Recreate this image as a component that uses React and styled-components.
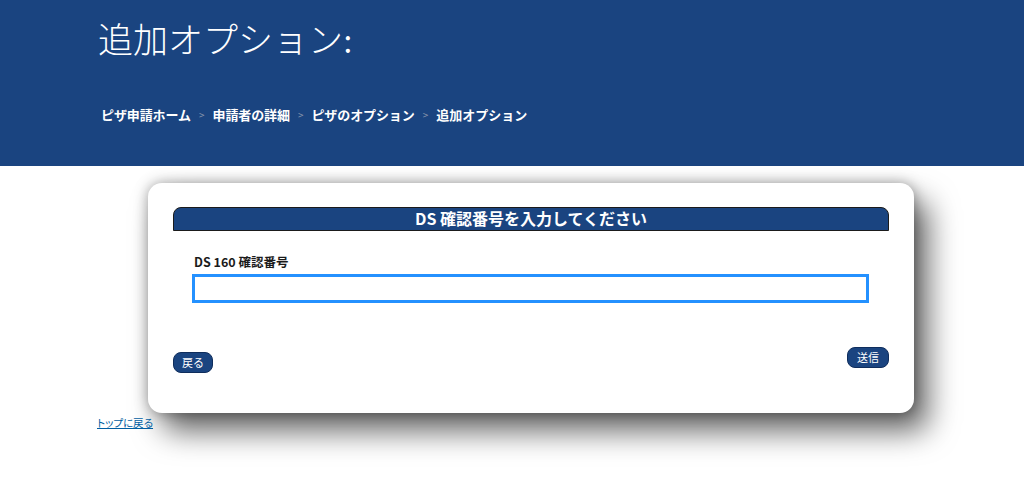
import React from "react";
import styled, { createGlobalStyle } from "styled-components";

const GlobalStyle = createGlobalStyle`
  body {
    margin: 0;
    min-height: 100vh;
    background: #fff;
    font-family: "Noto Sans CJK JP", "Noto Sans", sans-serif;
  }
`;

const Page = styled.div`
  min-height: 100vh;
  padding-bottom: 40px;
  box-sizing: border-box;
`;

const Header = styled.header`
  background: #1a4480;
  height: 166px;
  padding: 0 0 0 98px;
  box-sizing: border-box;
  color: #fff;
`;

const Title = styled.h1`
  margin: 0;
  padding-top: 16px;
  font-family: "Liberation Serif", "Noto Sans CJK JP", serif;
  font-size: 35px;
  font-weight: 300;
  line-height: 52px;
`;

const Crumbs = styled.nav`
  display: flex;
  align-items: center;
  margin-top: 38px;
  margin-left: 3px;
  font-size: 13px;
  font-weight: 700;
  line-height: 18px;
`;

const Crumb = styled.span`
  color: #fff;
  letter-spacing: ${({ current }) => (current ? 0 : -0.1)}px;
`;

const Sep = styled.span`
  color: #8a97ad;
  font-size: 10px;
  font-weight: 400;
  margin: 0 8px;
`;

const Main = styled.main`
  padding: 17px 0 0 148px;
`;

const Card = styled.section`
  width: 766px;
  box-sizing: border-box;
  background: #fff;
  border-radius: 14px;
  padding: 24px 25px 40px;
  box-shadow: 14px 18px 30px rgba(0, 0, 0, 0.6), 0 0 14px rgba(0, 0, 0, 0.35);
`;

const Heading = styled.h2`
  margin: 0;
  height: 24px;
  box-sizing: border-box;
  background: #1a4480;
  border: 1px solid #1b1b1b;
  border-radius: 8px 8px 0 0;
  color: #fff;
  text-align: center;
  font-size: 16px;
  font-weight: 700;
  line-height: 21px;
`;

const Field = styled.div`
  display: flex;
  flex-direction: column;
  padding: 22px 20px 0 19px;
`;

const Label = styled.label`
  font-size: 12.5px;
  font-weight: 600;
  color: #1b1b1b;
  line-height: 18px;
  margin-left: 2px;
  margin-bottom: 3px;
`;

const Input = styled.input`
  height: 29px;
  box-sizing: border-box;
  border: 3px solid #2491ff;
  outline: none;
  padding: 0 10px;
  font-size: 14px;
  font-family: inherit;
`;

const Actions = styled.div`
  display: flex;
  justify-content: space-between;
  align-items: flex-start;
  margin-top: 44px;
`;

const Button = styled.button`
  margin-top: ${({ drop }) => (drop ? 5 : 0)}px;
  background: #1a4480;
  color: #fff;
  border: 1px solid #0f2d5c;
  border-radius: 8px;
  height: 21px;
  padding: 0 ${({ wide }) => (wide ? 9 : 8)}px;
  font-family: inherit;
  font-size: 11px;
  line-height: 19px;
  cursor: pointer;
`;

const TopLink = styled.a`
  display: block;
  width: max-content;
  margin: 2px 0 0 97px;
  color: #005ea2;
  font-size: 10.5px;
  font-feature-settings: "palt";
  text-decoration: underline;
  line-height: 16px;
`;

export default function App() {
  return (
    <Page>
      <GlobalStyle />
      <Header>
        <Title>追加オプション:</Title>
        <Crumbs>
          <Crumb>ピザ申請ホーム</Crumb>
          <Sep>&gt;</Sep>
          <Crumb>申請者の詳細</Crumb>
          <Sep>&gt;</Sep>
          <Crumb>ピザのオプション</Crumb>
          <Sep>&gt;</Sep>
          <Crumb current>追加オプション</Crumb>
        </Crumbs>
      </Header>
      <Main>
        <Card>
          <Heading>DS 確認番号を入力してください</Heading>
          <Field>
            <Label htmlFor="ds160">DS 160 確認番号</Label>
            <Input id="ds160" autoFocus />
          </Field>
          <Actions>
            <Button drop>戻る</Button>
            <Button wide>送信</Button>
          </Actions>
        </Card>
      </Main>
      <TopLink href="#top">トップに戻る</TopLink>
    </Page>
  );
}
